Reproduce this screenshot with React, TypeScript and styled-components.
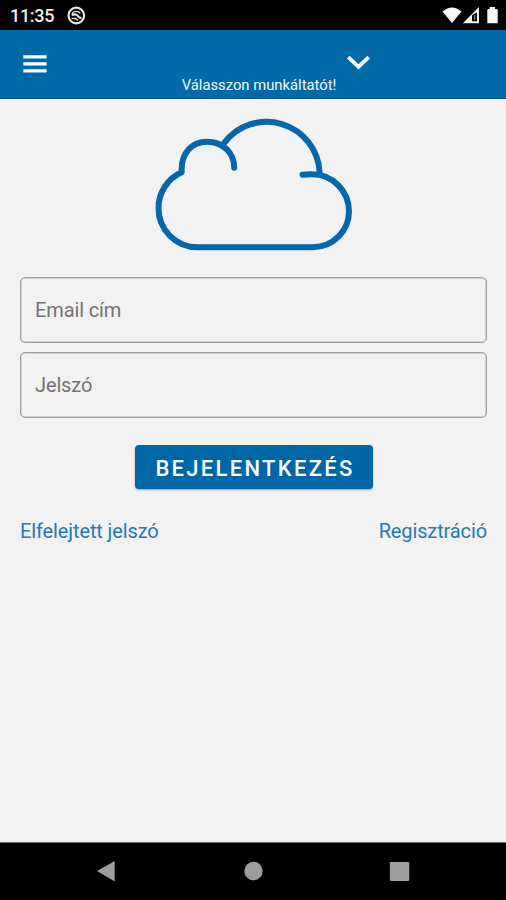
import React from "react";
import styled, { createGlobalStyle } from "styled-components";

const GlobalStyle = createGlobalStyle`
  * { box-sizing: border-box; }
  body { margin: 0; background: #f2f2f2; font-family: Roboto, "Liberation Sans", sans-serif; }
`;

const Screen = styled.div`
  width: 506px;
  height: 900px;
  display: flex;
  flex-direction: column;
  overflow: hidden;
  background: #f2f2f2;
`;

const StatusBar = styled.header`
  height: 30px;
  flex: none;
  display: flex;
  justify-content: space-between;
  background: #000;
  color: #ececec;
`;

const StatusInfo = styled.div`
  display: flex;
  padding: 7px 0 0 10px;
  font-size: 18px;
  font-weight: 500;
  line-height: 18px;
  letter-spacing: -0.3px;
`;

const Time = styled.span`
  width: 57px;
  white-space: nowrap;
`;

const NoticeIcon = styled.svg`
  width: 19px;
  height: 19px;
  margin-top: -1px;
`;

const StatusIcons = styled.svg`
  width: 66px;
  height: 30px;
`;

const AppBar = styled.nav`
  height: 69px;
  flex: none;
  display: grid;
  grid-template-columns: 161px 196px 1fr;
  background: #0069a8;
  border-bottom: 1px solid #075691;
`;

const MenuButton = styled.button`
  width: 24px;
  height: 18px;
  margin: 25px 0 0 23px;
  padding: 0;
  border: 0;
  background: none;
  svg { display: block; }
`;

const EmployerPicker = styled.div`
  display: flex;
  flex-direction: column;
  align-items: center;
  padding-top: 25px;
  color: #f2f7ff;
`;

const Chevron = styled.svg`
  width: 24px;
  height: 16px;
  flex: none;
  align-self: flex-end;
  margin-right: -13px;
`;

const EmployerLabel = styled.span`
  margin-top: 5px;
  font-size: 14.8px;
  line-height: 18px;
  white-space: nowrap;
`;

const Content = styled.main`
  flex: 1;
  display: flex;
  flex-direction: column;
  padding: 6px 19px 0 20px;
`;

const Cloud = styled.svg`
  width: 230px;
  height: 160px;
  flex: none;
  margin: 0 0 12px 120px;
`;

const Field = styled.input`
  width: 100%;
  height: 66px;
  flex: none;
  margin-bottom: 9px;
  padding: 0 14px;
  border: 1px solid #a0a0a0;
  border-radius: 5px;
  background: transparent;
  box-shadow: inset 0 0 0 0.5px #b4b4b4;
  font: 400 20px Roboto, sans-serif;
  letter-spacing: -0.13px;
  outline: none;
  &::placeholder { color: #747474; opacity: 1; }
`;

const LoginButton = styled.button`
  width: 238px;
  height: 44px;
  flex: none;
  margin: 18px 0 0 115px;
  padding: 3px 0 0 2px;
  border: 0;
  border-radius: 4px;
  background: #0067a6;
  color: #f8fbff;
  box-shadow: 0 1px 2px rgba(0, 40, 100, 0.4);
  font: 500 22px Roboto, sans-serif;
  letter-spacing: 2.3px;
`;

const Links = styled.div`
  display: flex;
  justify-content: space-between;
  margin-top: 30px;
`;

const TextLink = styled.a`
  color: #2679b4;
  font-size: 20px;
  line-height: 24px;
  letter-spacing: -0.12px;
`;

const SystemNav = styled.footer`
  height: 58px;
  flex: none;
  display: flex;
  justify-content: space-between;
  padding: 17px 95px 0;
  background: #000;
  border-top: 1px solid #6b6b6b;
`;

const NavIcon = styled.svg`
  width: 22px;
  height: 22px;
  fill: #9d9d9d;
`;

export default function App() {
  return (
    <>
      <GlobalStyle />
      <Screen>
        <StatusBar>
          <StatusInfo>
            <Time>11:35</Time>
            <NoticeIcon viewBox="0 0 19 19" fill="none" stroke="#e4e4e4">
              <circle cx="9.3" cy="9.5" r="7.8" strokeWidth="2.2" />
              <path d="M5 7.8C6.5 5 11 4.3 13.3 7.3" strokeWidth="1.4" />
              <path d="M4.8 9.2C7 7.8 9.5 8 10.6 9.8C11.5 11.4 13 12 14.5 12.2" strokeWidth="2.2" />
              <path d="M4.8 12.5H8.5L11 14.5" strokeWidth="1.4" />
            </NoticeIcon>
          </StatusInfo>
          <StatusIcons viewBox="440 0 66 30" fill="#f7f7f7">
            <path d="M442.5 11.4Q452 3.6 461.5 11.4L452 23Z" />
            <path fillRule="evenodd" d="M462.8 23.3L479 7V23.3ZM472 15.2V21.3H477V12.2Z" />
            <path d="M474 15.6L475.4 14.4V19.8H474Z" fill="#777" />
            <path d="M487.3 10Q487.3 9 488.3 9H489.7V7H495V9H496.7Q497.7 9 497.7 10V23.3H487.3Z" />
          </StatusIcons>
        </StatusBar>
        <AppBar>
          <MenuButton aria-label="Menü">
            <svg width="24" height="18" viewBox="0 0 24 18" fill="#fff">
              <path d="M0.3 0.3H23.6V3.5H0.3ZM0.3 7.2H23.6V10.5H0.3ZM0.3 14.2H23.6V17.5H0.3Z" />
            </svg>
          </MenuButton>
          <EmployerPicker>
            <Chevron viewBox="0 0 24 16">
              <path d="M2.3 2.2L12.5 11.9L22.7 2.2" fill="none" stroke="#fff" strokeWidth="3.8" />
            </Chevron>
            <EmployerLabel>Válasszon munkáltatót!</EmployerLabel>
          </EmployerPicker>
        </AppBar>
        <Content>
          <Cloud viewBox="0 0 230 160" fill="none" stroke="#0666aa" strokeWidth="6" strokeLinecap="round">
            <path d="M162.5 69.7Q167 69.2 172 69.2A37 37 0 0 1 209 106.2A36 36 0 0 1 173 142.2H57.5A39 39 0 0 1 18.5 103.2A39 39 0 0 1 41.7 67.3C40.5 48 52 36.7 67 36.7C83 36.7 94.2 48 94.2 62.7" strokeLinejoin="round" />
            <path d="M84 38.3A53 53 0 0 1 179.6 67.2" />
          </Cloud>
          <Field type="email" placeholder="Email cím" />
          <Field type="password" placeholder="Jelszó" />
          <LoginButton>BEJELENTKEZÉS</LoginButton>
          <Links>
            <TextLink>Elfelejtett jelszó</TextLink>
            <TextLink>Regisztráció</TextLink>
          </Links>
        </Content>
        <SystemNav>
          <NavIcon viewBox="0 0 22 22"><path d="M2 11L19.7 1V21.5Z" /></NavIcon>
          <NavIcon viewBox="0 0 22 22"><circle cx="11.5" cy="11" r="9.2" /></NavIcon>
          <NavIcon viewBox="0 0 22 22"><rect x="0.8" y="2" width="19.5" height="19" rx="1" /></NavIcon>
        </SystemNav>
      </Screen>
    </>
  );
}
